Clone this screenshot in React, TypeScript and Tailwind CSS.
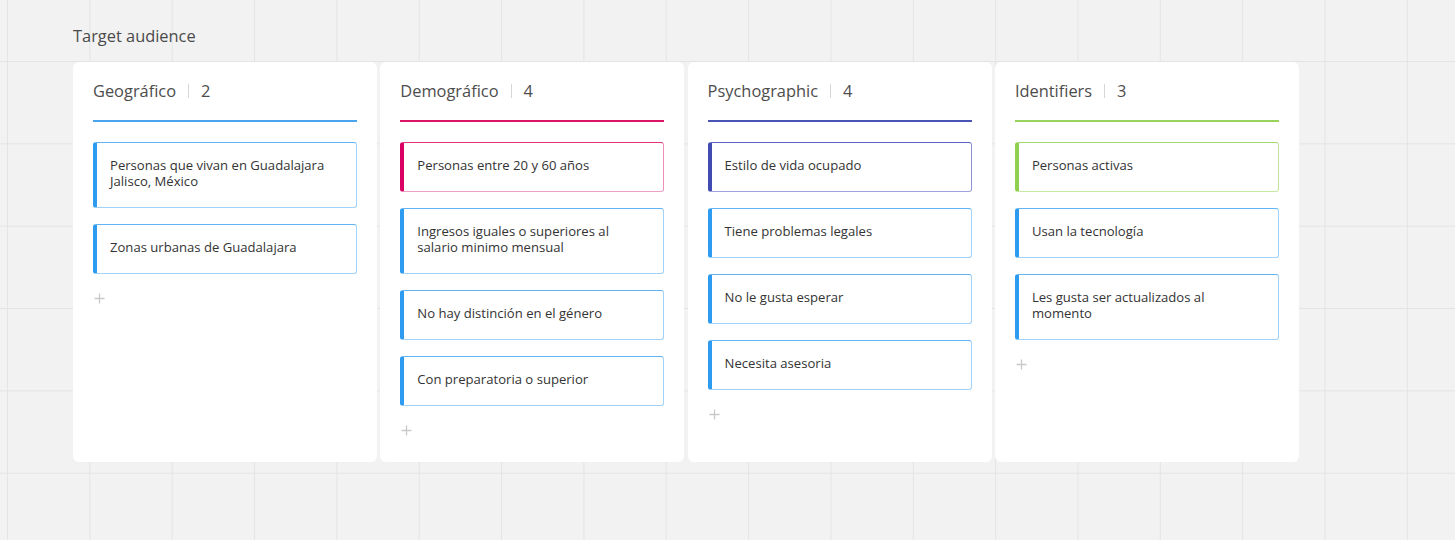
import React from "react";

type Item = { text: string; color: "blue" | "pink" | "indigo" | "green" };

const cardStyles: Record<Item["color"], string> = {
  blue: "border-l-[#2d9bf0] border-t-[#62b3f3] border-r-[#a3d2f8] border-b-[#a3d2f8]",
  pink: "border-l-[#da0063] border-t-[#e2327e] border-r-[#ee8fb7] border-b-[#f0a0c2]",
  indigo: "border-l-[#414bb2] border-t-[#5d65c0] border-r-[#8d92d3] border-b-[#9da2da]",
  green: "border-l-[#8fd14f] border-t-[#a3da6f] border-r-[#c0e69c] border-b-[#c6e9a6]",
};

const columns: { title: string; line: string; items: Item[] }[] = [
  {
    title: "Geográfico",
    line: "bg-[#4aa5ee]",
    items: [
      { text: "Personas que vivan en Guadalajara Jalisco, México", color: "blue" },
      { text: "Zonas urbanas de Guadalajara", color: "blue" },
    ],
  },
  {
    title: "Demográfico",
    line: "bg-[#dc1468]",
    items: [
      { text: "Personas entre 20 y 60 años", color: "pink" },
      { text: "Ingresos iguales o superiores al salario minimo mensual", color: "blue" },
      { text: "No hay distinción en el género", color: "blue" },
      { text: "Con preparatoria o superior", color: "blue" },
    ],
  },
  {
    title: "Psychographic",
    line: "bg-[#4a53b6]",
    items: [
      { text: "Estilo de vida ocupado", color: "indigo" },
      { text: "Tiene problemas legales", color: "blue" },
      { text: "No le gusta esperar", color: "blue" },
      { text: "Necesita asesoria", color: "blue" },
    ],
  },
  {
    title: "Identifiers",
    line: "bg-[#98d45c]",
    items: [
      { text: "Personas activas", color: "green" },
      { text: "Usan la tecnología", color: "blue" },
      { text: "Les gusta ser actualizados al momento", color: "blue" },
    ],
  },
];

function Plus() {
  return (
    <svg width="11" height="11" viewBox="0 0 11 11" className="block">
      <path d="M5.5 0.5V10.5M0.5 5.5H10.5" stroke="#c9c9c9" strokeWidth="1.3" />
    </svg>
  );
}

export default function App() {
  return (
    <div
      className="w-full h-[540px] overflow-hidden bg-[#f2f2f2] bg-[linear-gradient(to_right,#e4e4e4_1px,transparent_1px),linear-gradient(to_bottom,#e4e4e4_1px,transparent_1px)] bg-[size:82.35px_82.35px] bg-[position:7px_61px] pt-[26px] pl-[73px]"
      style={{ fontFamily: '"Open Sans", "Noto Sans", sans-serif' }}
    >
      <div className="text-[16.4px] leading-[20px] text-[#4a4a4a]">Target audience</div>
      <div className="mt-[16px] flex gap-[3.3px]">
        {columns.map((col) => (
          <div key={col.title} className="w-[304px] h-[400px] shrink-0 bg-white rounded-[6px] px-5 pt-[18px]">
            <div className="flex items-center h-[22px] text-[16.4px] leading-[22px] text-[#4d4d4d]">
              <span>{col.title}</span>
              <span className="mx-[12px] w-px h-[14px] bg-[#d6d6d6]" />
              <span>{col.items.length}</span>
            </div>
            <div className={`mt-[18px] h-[2px] ${col.line}`} />
            <div className="mt-[20px] flex flex-col gap-4">
              {col.items.map((it) => (
                <div
                  key={it.text}
                  className={`rounded-[3px] border border-l-4 ${cardStyles[it.color]} pl-[13px] pr-4 pt-[14px] pb-[18px] text-[13.1px] leading-[16px] text-[#333333]`}
                >
                  {it.text}
                </div>
              ))}
            </div>
            <div className="mt-[19px] ml-px">
              <Plus />
            </div>
          </div>
        ))}
      </div>
    </div>
  );
}
